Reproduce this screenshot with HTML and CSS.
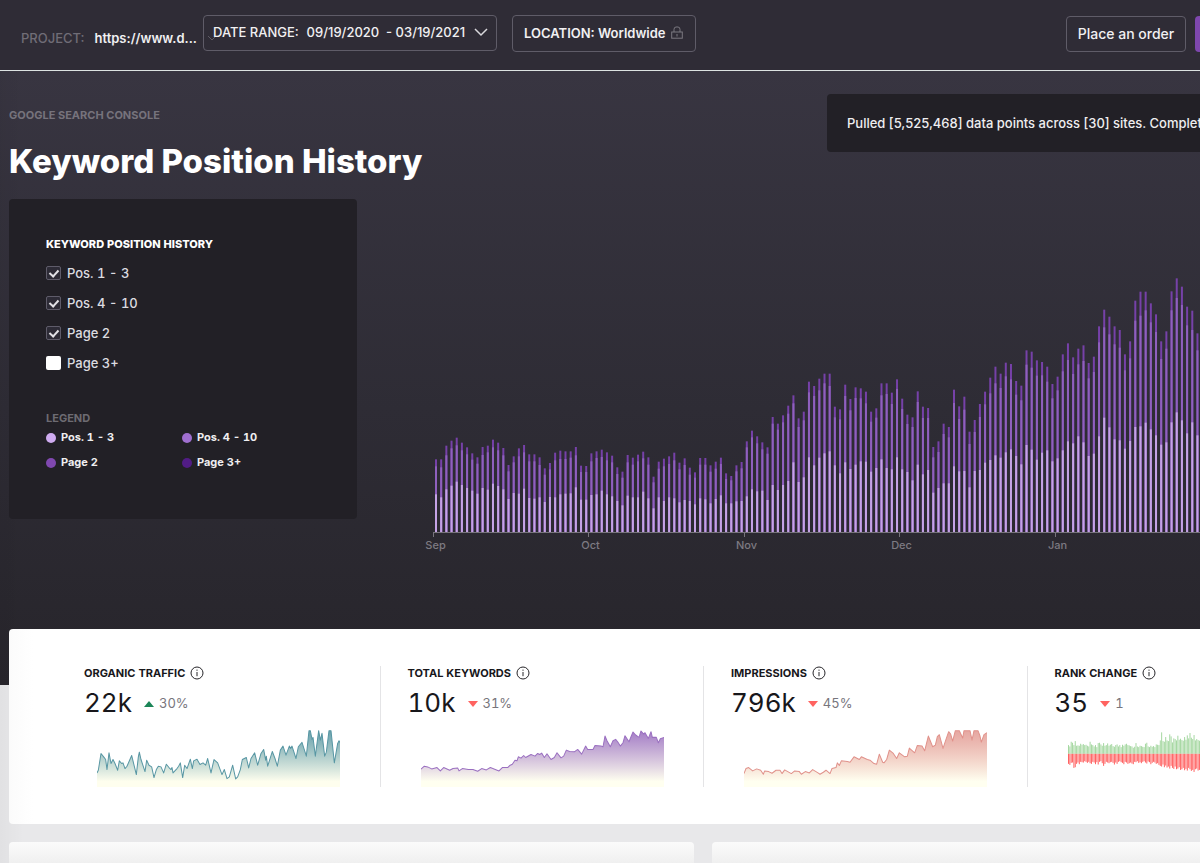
FILE: index.html
```html
<!DOCTYPE html>
<html lang="en">
<head>
<meta charset="utf-8">
<title>Keyword Position History</title>
<link rel="stylesheet" href="styles.css">
</head>
<body>
<header class="topbar">
  <button class="project" type="button">
    <span class="project-label">PROJECT:</span>
    <span class="project-url">https://www.d...</span>
    <svg class="project-caret" width="10" height="6" viewBox="0 0 10 6"><path d="M1 1l4 4 4-4" fill="none" stroke="#5d5a64"/></svg>
  </button>
  <button class="outline date" type="button">
    <span>DATE RANGE:</span>
    <span class="date-value">09/19/2020 &nbsp;- 03/19/2021</span>
    <svg width="16" height="10" viewBox="0 0 16 10"><path d="M2 2l6 6 6-6" fill="none" stroke="#d9d8dc" stroke-width="1.5"/></svg>
  </button>
  <button class="outline location" type="button">
    <span>LOCATION: Worldwide</span>
    <svg width="12" height="13" viewBox="0 0 12 13" fill="none" stroke="#7b7880"><path d="M3 6V3.500Q3 1 5 1h2q2 0 2 2.500V6"/><rect x=".7" y="6" width="10.600" height="6.200"/><path d="M6 8v2.500"/></svg>
  </button>
  <button class="outline order" type="button">Place an order</button>
  <button class="primary" type="button" aria-label="Account"></button>
</header>

<main class="page">
  <div class="heading">
    <div>
      <p class="eyebrow">GOOGLE SEARCH CONSOLE</p>
      <h1>Keyword Position History</h1>
    </div>
    <div class="notice">Pulled [5,525,468] data points across [30] sites. Completed</div>
  </div>

  <section class="history">
    <div class="panel">
      <h2>KEYWORD POSITION HISTORY</h2>
      <label class="check"><input type="checkbox" checked>Pos. 1 - 3</label>
      <label class="check"><input type="checkbox" checked>Pos. 4 - 10</label>
      <label class="check"><input type="checkbox" checked>Page 2</label>
      <label class="check"><input type="checkbox">Page 3+</label>
      <h3>LEGEND</h3>
      <ul class="legend">
        <li><i class="dot top3"></i>Pos. 1 - 3</li>
        <li><i class="dot top10"></i>Pos. 4 - 10</li>
        <li><i class="dot page2"></i>Page 2</li>
        <li><i class="dot page3"></i>Page 3+</li>
      </ul>
    </div>
    <svg class="chart" id="chart" role="img" aria-label="Keyword position history"></svg>
  </section>

  <section class="stats">
    <article class="stat">
      <h4>ORGANIC TRAFFIC <svg class="info" viewBox="0 0 14 14"><circle cx="7" cy="7" r="6"/><path d="M7 6v4.200M7 3.600v1.200"/></svg></h4>
      <p class="figure"><span class="value">22k</span><i class="up"></i><span class="delta">30%</span></p>
      <svg class="spark" id="traffic" viewBox="0 0 729 170" preserveAspectRatio="none"></svg>
    </article>
    <article class="stat">
      <h4>TOTAL KEYWORDS <svg class="info" viewBox="0 0 14 14"><circle cx="7" cy="7" r="6"/><path d="M7 6v4.200M7 3.600v1.200"/></svg></h4>
      <p class="figure"><span class="value">10k</span><i class="down"></i><span class="delta">31%</span></p>
      <svg class="spark" id="keywords" viewBox="0 0 729 170" preserveAspectRatio="none"></svg>
    </article>
    <article class="stat">
      <h4>IMPRESSIONS <svg class="info" viewBox="0 0 14 14"><circle cx="7" cy="7" r="6"/><path d="M7 6v4.200M7 3.600v1.200"/></svg></h4>
      <p class="figure"><span class="value">796k</span><i class="down"></i><span class="delta">45%</span></p>
      <svg class="spark" id="impressions" viewBox="0 0 729 170" preserveAspectRatio="none"></svg>
    </article>
    <article class="stat">
      <h4>RANK CHANGE <svg class="info" viewBox="0 0 14 14"><circle cx="7" cy="7" r="6"/><path d="M7 6v4.200M7 3.600v1.200"/></svg></h4>
      <p class="figure"><span class="value">35</span><i class="down"></i><span class="delta">1</span></p>
      <svg class="spark" id="rank" viewBox="0 0 729 170" preserveAspectRatio="none"></svg>
    </article>
  </section>

  <div class="row">
    <section class="card"></section>
    <section class="card"></section>
  </div>
</main>
<script src="charts.js"></script>
</body>
</html>
```

FILE: styles.css
```css
* { box-sizing: border-box; }

body {
  margin: 0;
  overflow: hidden;
  background: #e8e8ea;
  font-family: Inter, "Liberation Sans", sans-serif;
  color: #18171b;
}

h1, h2, h3, h4, p, ul { margin: 0; padding: 0; }
button { font: inherit; color: inherit; background: none; border: 0; padding: 0; }
svg { flex: none; }

.topbar {
  display: flex;
  align-items: flex-start;
  min-width: 1397px;
  height: 71px;
  padding: 15px 0 0 21px;
  background: #2f2c36;
  border-bottom: 1px solid #dde3e2;
  color: #f1f0f2;
  font-size: 13px;
  font-weight: 500;
}

.project {
  display: flex;
  align-items: center;
  gap: 10px;
  width: 182px;
  height: 46px;
  white-space: nowrap;
}
.project-label { color: #706d76; }
.project-url { font-weight: 600; }

.outline {
  display: flex;
  align-items: center;
  height: 37px;
  border: 1px solid #5f5c68;
  border-radius: 4px;
  white-space: nowrap;
}
.date { width: 294px; height: 36px; padding: 0 7px 2px 9px; }
.date-value { margin: 0 auto; }
.location { width: 184px; margin-left: 15px; padding: 0 12px 2px 11px; justify-content: space-between; font-weight: 600; }
.order { width: 120px; margin-left: auto; margin-top: 1px; height: 36px; padding-bottom: 1px; justify-content: center; font-size: 14px; }
.primary { width: 202px; height: 36px; margin: 1px 0 0 9px; border-radius: 4px; background: #7e47ae; }

.page {
  min-width: 1397px;
  min-height: 792px;
  padding: 23px 0 0 9px;
  background:
    linear-gradient(to right, rgba(0, 0, 0, 0.03), transparent 24px),
    linear-gradient(#383541, #2e2c35 55%, #27252b) 0 0 / 100% 614px no-repeat;
}

.heading { display: flex; justify-content: space-between; height: 105px; }
.eyebrow { padding-top: 13px; font-size: 11px; line-height: 16px; font-weight: 700; color: #76737c; }
h1 { margin-top: 16px; font-size: 33px; line-height: 44px; font-weight: 800; color: #fff; }
.notice {
  width: 570px;
  height: 58px;
  padding-left: 20px;
  border-radius: 4px;
  background: #222026;
  color: #efeef0;
  font-size: 13px;
  font-weight: 500;
  line-height: 58px;
  white-space: nowrap;
}

.history { display: flex; height: 430px; }
.panel {
  flex: none;
  width: 348px;
  height: 320px;
  padding: 37px;
  border-radius: 4px;
  background: #222026;
  color: #dddce0;
  font-variant-numeric: tabular-nums;
}
.panel h2 { margin-bottom: 6px; font-size: 11px; line-height: 16px; font-weight: 800; color: #fff; }
.panel h3 { margin-top: 33px; font-size: 11px; line-height: 14px; font-weight: 700; color: #6d6b72; }

.check { display: flex; align-items: center; gap: 6px; height: 30px; font-size: 13px; font-weight: 500; }
.check input {
  appearance: none;
  display: flex;
  justify-content: center;
  width: 15px;
  height: 14px;
  margin: 0;
  border-radius: 2px;
  background: #fff;
}
.check input:checked { background: #2d2b36; border: 1px solid #5f5c6a; }
.check input:checked::after {
  content: "";
  width: 4px;
  height: 7px;
  margin-top: 1px;
  border: solid #e2e1e6;
  border-width: 0 2px 2px 0;
  transform: rotate(42deg);
}

.legend {
  display: grid;
  grid-template-columns: 136px 1fr;
  list-style: none;
  font-size: 11px;
  font-weight: 700;
  line-height: 25px;
  color: #efeef0;
}
.legend li { display: flex; align-items: center; gap: 5px; }
.dot { width: 10px; height: 10px; border-radius: 50%; }
.top3 { background: #cfabf0; }
.top10 { background: #a06fd0; }
.page2 { background: #8048b0; }
.page3 { background: #511c85; }

.chart { flex: 1; height: 370px; margin-left: 60px; }
.chart text { fill: #7d7a82; font-size: 11px; font-weight: 500; text-anchor: middle; }

.stats {
  display: grid;
  grid-template-columns: repeat(4, 1fr);
  padding: 37px 46px 37px 48px;
  border-radius: 4px;
  background: linear-gradient(to right, #fbfbfb, #fff 24px);
  font-variant-numeric: tabular-nums;
}
.stat { height: 121px; padding-left: 27px; border-right: 1px solid #e4e4e6; }
.stat:last-child { border-right: 0; }
.stat h4 { display: flex; align-items: center; gap: 5px; font-size: 11px; line-height: 14px; font-weight: 700; }
.info { width: 14px; height: 14px; fill: none; stroke: #27262a; }
.figure { display: flex; align-items: center; height: 44px; }
.value { padding-top: 1px; font-size: 26px; line-height: 32px; }
.up, .down { margin: 3px 5px 0 12px; border: solid transparent; border-width: 0 5px; }
.up { border-bottom: 6px solid #1b8557; }
.down { border-top: 6px solid #ff6360; }
.delta { padding-top: 1px; font-size: 13px; color: #77757c; }
.spark { display: block; width: 243px; height: 57px; margin: 6px 0 0 13px; }

.row { display: grid; grid-template-columns: 1fr 1fr; gap: 18px; margin-top: 18px; }
.card { height: 100px; border-radius: 4px; background: linear-gradient(#fbfbfb, #eee 24px); }
```

FILE: charts.js
```js
const NS = "http://www.w3.org/2000/svg";

function add(parent, name, attrs) {
  const el = document.createElementNS(NS, name);
  for (const key in attrs) el.setAttribute(key, attrs[key]);
  parent.appendChild(el);
  return el;
}

// Daily totals, three numbers a day: all pages, first page, top three.
const days = `221 200 116,221 197 107,262 233 131,277 254 142,286 263 154,271 248 144,257 236 135,239 220 127,227 208 118,258 234 135,262 242 130,280 257 148,271 248 141,255 233 131,204 185 102,230 212 120,254 230 118,264 242 133,236 215 105,236 215 103,227 204 107,194 175 93,210 191 108,241 218 107,247 222 116,245 222 118,245 226 119,258 233 137,202 183 100,201 183 100,239 215 114,245 225 116,250 228 127,242 218 116,232 212 110,197 177 96,184 166 83,234 212 112,226 205 107,235 215 107,244 224 124,227 205 104,169 152 74,214 193 107,223 200 96,230 207 107,241 218 104,211 191 92,224 204 99,196 175 96,182 166 86,225 205 104,225 205 101,203 184 89,214 193 102,226 207 113,179 162 89,171 158 89,203 185 95,213 194 96,275 257 110,307 287 131,290 269 125,272 251 127,257 238 99,348 328 144,328 310 129,353 332 144,382 358 156,413 389 212,344 318 153,364 338 167,454 422 227,441 411 203,463 428 226,478 449 239,478 441 245,379 347 203,371 341 179,445 411 212,402 368 192,437 405 205,434 404 215,424 389 214,364 334 184,374 346 195,449 413 221,449 417 195,421 387 191,461 432 227,403 372 191,355 327 183,347 318 158,425 393 205,379 345 176,375 345 189,258 227 121,275 243 135,328 297 149,318 287 149,430 390 200,380 342 185,409 370 186,304 267 137,339 303 186,387 348 189,424 386 211,466 419 219,499 449 233,478 435 226,511 470 242,507 461 251,456 415 231,442 398 206,548 505 264,544 496 250,518 472 220,513 473 241,499 454 248,447 404 215,469 428 224,536 485 248,569 519 275,527 477 269,553 506 290,563 516 272,510 464 231,529 483 238,620 572 290,670 617 346,649 596 317,620 566 281,609 556 278,536 488 253,575 524 276,697 637 318,724 652 320,724 668 331,689 632 311,656 603 293,575 522 265,605 553 272,725 668 332,764 705 362,739 684 338,679 623 299,667 609 332,599 548 293,560 510 270,590 540 285,640 590 310,690 630 330,710 650 340,680 620 320,640 590 300,600 550 280,570 520 270,600 550 290,660 600 320,700 640 340`
  .split(",").map(d => d.split(" ").map(Number));

const chart = document.getElementById("chart");
const base = 334, left = 18, step = 5.18;
days.forEach((day, i) => {
  ["#7641a8", "#8f60be", "#c5a3e6"].forEach((fill, k) => {
    const h = day[k] / 3;
    add(chart, "rect", { x: left + i * step, y: base - h, width: 2, height: h, fill });
  });
});
add(chart, "path", { d: `M16 ${base - 0.5}H1000`, stroke: "#77747c" });
["Sep", "Oct", "Nov", "Dec", "Jan"].forEach((month, i) => {
  const x = 16.5 + Math.round(i * 155.4);
  add(chart, "path", { d: `M${x} ${base}v4`, stroke: "#77747c" });
  add(chart, "text", { x: x + 2, y: 350 }).textContent = month;
});

function area(id, color, bottom, opacity, points) {
  const svg = document.getElementById(id);
  const defs = add(svg, "defs", {});
  const grad = add(defs, "linearGradient", { id: id + "-fill", x1: 0, y1: 0, x2: 0, y2: 1 });
  add(grad, "stop", { offset: 0, "stop-color": color, "stop-opacity": opacity });
  add(grad, "stop", { offset: 0.9, "stop-color": bottom });
  add(svg, "path", { d: `M0,170L${points}L729,170Z`, fill: `url(#${id}-fill)` });
  add(svg, "polyline", { points, fill: "none", stroke: color, "stroke-width": 3, "stroke-linejoin": "round" });
}

area("traffic", "#5796a3", "#fefeee", 0.9, "0,128 4,120 12,70 20,80 26,88 30,118 36,68 42,100 48,88 54,100 62,120 67,92 74,100 78,98 84,115 90,108 104,76 118,133 124,80 127,66 132,88 144,124 149,90 156,105 164,110 171,142 178,118 184,108 192,110 200,128 208,102 216,112 222,118 225,112 228,128 240,115 245,108 250,98 257,142 263,105 270,115 280,87 286,115 290,92 300,87 309,103 318,98 326,105 332,85 342,128 351,88 362,98 375,133 382,118 390,145 397,140 407,105 416,146 422,140 430,118 436,88 448,82 455,113 462,85 473,68 482,105 492,70 500,58 506,90 508,78 512,108 526,64 534,85 541,108 550,60 558,48 567,75 577,48 581,55 585,48 597,85 604,50 615,37 624,65 628,78 636,2 640,2 645,28 648,22 655,78 665,2 670,30 675,10 683,78 688,66 696,2 702,2 712,98 722,40 726,32 729,38");
area("keywords", "#9a6fc0", "#fffff0", 0.9, "0,117 10,108 20,110 32,116 48,112 58,122 68,112 86,120 96,115 110,113 114,122 124,115 142,118 156,118 170,123 182,115 196,119 208,112 234,122 244,112 260,112 266,106 274,102 282,90 288,92 292,80 300,84 308,76 314,82 330,73 342,78 350,70 356,73 362,69 370,82 378,71 390,88 400,82 408,68 420,83 428,78 436,60 446,64 460,65 470,58 482,72 494,48 500,58 516,58 522,46 540,48 546,50 552,18 558,32 568,50 576,32 584,28 590,35 598,48 606,38 612,17 624,35 630,20 636,6 644,15 654,22 660,3 668,12 672,8 682,25 690,5 694,22 706,22 712,38 718,26 729,22");
area("impressions", "#e0918a", "#fffff0", 0.8, "0,130 6,115 14,112 26,122 38,116 50,120 58,132 62,122 74,124 84,129 96,120 108,120 114,130 122,119 142,130 152,122 166,124 172,132 184,124 196,128 206,118 222,128 228,132 238,126 246,120 258,130 264,115 276,112 280,98 286,106 292,92 310,94 318,96 330,80 346,88 352,80 370,88 378,90 390,100 398,102 406,72 416,96 420,98 428,88 436,60 448,70 458,85 466,68 482,80 490,78 496,54 512,68 520,46 534,48 542,62 553,18 566,50 574,45 580,20 586,14 597,55 606,28 614,5 620,12 626,33 634,2 646,2 656,24 660,2 678,2 684,30 690,2 702,2 708,18 712,36 720,14 729,8");

// Positions gained (above the line) and lost (below it).
const gained = [26,22,36,33,26,38,24,25,24,30,27,29,26,27,24,22,36,28,26,22,26,20,32,33,28,24,32,24,26,31,24,27,29,23,21,26,28,22,26,20,27,24,28,30,26,25,23,22,18,21,32,22,20,24,23,21,20,30,33,22,20,24,21,23,20,28,27,26,40,64,38,36,50,40,38,58,52,34,46,44,40,54,42,45,41,39,50,42,55,46,62,48,44,56,40,44,41,39];
const lost = [30,33,27,26,42,40,30,26,31,24,25,26,22,24,27,24,28,30,24,26,31,25,32,24,22,28,36,30,24,26,28,25,24,27,32,26,30,24,22,25,27,31,24,26,30,28,26,29,31,24,25,22,27,25,28,24,22,26,29,23,25,31,27,24,26,30,28,33,36,38,32,40,35,41,38,44,36,42,45,38,46,44,40,48,46,42,49,45,50,42,46,51,48,54,46,44,50,48];
const rank = document.getElementById("rank");
for (let i = 0; i < 180; i++) {
  const k = i < 98 ? i : 70 + (i % 28);
  add(rank, "rect", { x: i * 4.05, y: 71 - gained[k], width: 3, height: gained[k], fill: "#a5d8a1" });
  add(rank, "rect", { x: i * 4.05, y: 71, width: 3, height: lost[k], fill: "#ff6363" });
}
```
